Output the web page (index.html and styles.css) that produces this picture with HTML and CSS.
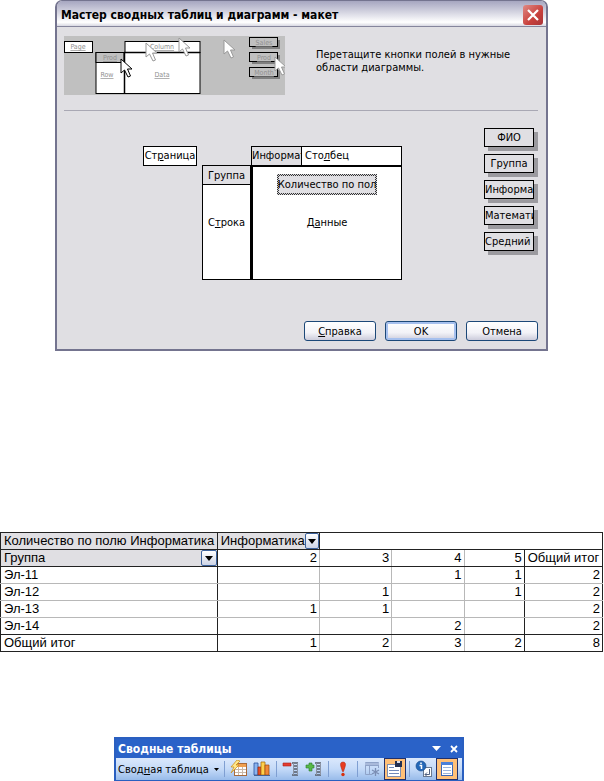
FILE: index.html
```html
<!DOCTYPE html>
<html lang="ru">
<head>
    <meta charset="UTF-8">
    <meta name="viewport" content="width=device-width, initial-scale=1.0">
    <title>Сводные таблицы</title>
    <link rel="stylesheet" href="styles.css">
</head>
<body>
    <section class="dialog">
        <header class="dialog-title">
            <h1>Мастер сводных таблиц и диаграмм - макет</h1>
            <button type="button" class="close" aria-label="Закрыть">
                <svg width="20" height="20" viewBox="0 0 20 20"><path d="M5 5L15 15M15 5L5 15" stroke="#fff" stroke-width="2.2"/></svg>
            </button>
        </header>
        <div class="dialog-body">
            <div class="intro">
                <svg class="preview" width="221" height="59" viewBox="0 0 221 59">
                    <defs>
                        <path id="cursor" d="M0 0V14L3.5 11L7 18L9.5 17L6.500 10H11Z"/>
                    </defs>
                    <rect width="221" height="59" fill="#c0c0c0"/>
                    <g fill="#fff" stroke="#000">
                        <rect x="0.500" y="5.500" width="28" height="11"/>
                        <rect x="61" y="5.500" width="75" height="11"/>
                        <rect x="32" y="16.500" width="104" height="41"/>
                        <rect x="32" y="16.500" width="28" height="10" fill="#c0c0c0"/>
                        <path d="M60.500 16V58M60 16.500H136" stroke-width="1.500"/>
                    </g>
                    <g fill="#808080">
                        <rect x="188" y="4" width="28" height="9"/>
                        <rect x="188" y="19" width="28" height="9"/>
                        <rect x="188" y="34" width="28" height="9"/>
                    </g>
                    <g fill="#c0c0c0" stroke="#000">
                        <rect x="185.500" y="1.500" width="28" height="9"/>
                        <rect x="185.500" y="16.500" width="28" height="9"/>
                        <rect x="185.500" y="31.500" width="28" height="9"/>
                    </g>
                    <g class="preview-text">
                        <text x="14" y="13">Page</text>
                        <text x="98" y="13">Column</text>
                        <text x="46" y="24">Prod</text>
                        <text x="43" y="41">Row</text>
                        <text x="98" y="41">Data</text>
                        <text x="200" y="9">Sales</text>
                        <text x="200" y="24">Prod</text>
                        <text x="200" y="39">Month</text>
                    </g>
                    <g fill="#fff" stroke="#999">
                        <use href="#cursor" x="82" y="7"/>
                        <use href="#cursor" x="115" y="2"/>
                        <use href="#cursor" x="160" y="4"/>
                        <use href="#cursor" x="211" y="21"/>
                        <use href="#cursor" x="57" y="23" stroke="#000"/>
                    </g>
                </svg>
                <p>Перетащите кнопки полей в нужные области диаграммы.</p>
            </div>
            <div class="layout">
                <div class="page-area">Ст<u>р</u>аница</div>
                <div class="pivot">
                    <div class="column-area">
                        <button type="button" class="field">Информат</button>
                        <span>Сто<u>л</u>бец</span>
                    </div>
                    <div class="row-area">
                        <button type="button" class="field">Группа</button>
                        <span>С<u>т</u>рока</span>
                    </div>
                    <div class="data-area">
                        <button type="button" class="data-field"><span>Количество по пол</span></button>
                        <span>Д<u>а</u>нные</span>
                    </div>
                </div>
                <div class="field-list">
                    <button type="button" class="field">ФИО</button>
                    <button type="button" class="field">Группа</button>
                    <button type="button" class="field long">Информат</button>
                    <button type="button" class="field long">Математи</button>
                    <button type="button" class="field long">Средний</button>
                </div>
            </div>
            <div class="actions">
                <button type="button"><u>С</u>правка</button>
                <button type="button" class="default">OK</button>
                <button type="button">Отмена</button>
            </div>
        </div>
    </section>

    <table class="report">
        <colgroup>
            <col class="col-group"><col class="col-2"><col class="col-3"><col class="col-4"><col class="col-5"><col class="col-total">
        </colgroup>
        <thead>
            <tr>
                <th class="shade">Количество по полю Информатика</th>
                <th class="shade">
                    <div class="filter">Информатика
                        <button type="button" class="arrow" aria-label="Фильтр: Информатика"><svg width="8" height="5" viewBox="0 0 8 5"><path d="M0 0H8L4 5Z"/></svg></button>
                    </div>
                </th>
                <th colspan="4"></th>
            </tr>
            <tr>
                <th class="shade">
                    <div class="filter">Группа
                        <button type="button" class="arrow" aria-label="Фильтр: Группа"><svg width="8" height="5" viewBox="0 0 8 5"><path d="M0 0H8L4 5Z"/></svg></button>
                    </div>
                </th>
                <td>2</td><td>3</td><td>4</td><td>5</td><th>Общий итог</th>
            </tr>
        </thead>
        <tbody>
            <tr><th>Эл-11</th><td></td><td></td><td>1</td><td>1</td><td>2</td></tr>
            <tr><th>Эл-12</th><td></td><td>1</td><td></td><td>1</td><td>2</td></tr>
            <tr><th>Эл-13</th><td>1</td><td>1</td><td></td><td></td><td>2</td></tr>
            <tr><th>Эл-14</th><td></td><td></td><td>2</td><td></td><td>2</td></tr>
        </tbody>
        <tfoot>
            <tr><th>Общий итог</th><td>1</td><td>2</td><td>3</td><td>2</td><td>8</td></tr>
        </tfoot>
    </table>

    <section class="toolbar">
        <header class="toolbar-title">
            <h2>Сводные таблицы</h2>
            <button type="button" aria-label="Параметры панели"><svg width="9" height="5" viewBox="0 0 9 5"><path d="M0 0H9L4.500 5Z" fill="#fff"/></svg></button>
            <button type="button" aria-label="Закрыть панель"><svg width="8" height="8" viewBox="0 0 8 8"><path d="M1 1L7 7M7 1L1 7" stroke="#fff" stroke-width="1.800"/></svg></button>
        </header>
        <div class="tools">
            <button type="button" class="menu"><span>Свод<u>н</u>ая таблица</span><svg width="5" height="3" viewBox="0 0 5 3"><path d="M0 0H5L2.500 3Z"/></svg></button>
            <i class="sep"></i>
            <button type="button" aria-label="Формат отчета">
                <svg width="18" height="18" viewBox="0 0 18 18">
                    <rect x="4.500" y="3.500" width="12" height="12" fill="#fff" stroke="#a86a3c"/>
                    <path d="M5 4H16V7H5Z" fill="#f0a050"/>
                    <path d="M5 9.500H16M5 12.500H16M8.500 7V15M12.500 7V15" stroke="#c9b8a8"/>
                    <path d="M7 0L1 7H4L1 13L9 5H6L10 1Z" fill="#ffe88c" stroke="#c98a10" stroke-width=".7"/>
                </svg>
            </button>
            <button type="button" aria-label="Мастер диаграмм">
                <svg width="18" height="18" viewBox="0 0 18 18">
                    <path d="M1 3H5V15H1Z" fill="#8ab4f0" stroke="#2850a0" stroke-width=".8"/>
                    <path d="M5 7H8V15H5Z" fill="#e85028" stroke="#98280c" stroke-width=".7"/>
                    <path d="M8 2H12V15H8Z" fill="#ffd04c" stroke="#a87010" stroke-width=".8"/>
                    <path d="M12 5H16V15H12Z" fill="#f08838" stroke="#98480c" stroke-width=".7"/>
                    <path d="M1 15.500H17" stroke="#486090"/>
                </svg>
            </button>
            <i class="sep"></i>
            <button type="button" aria-label="Скрыть детали">
                <svg width="18" height="18" viewBox="0 0 18 18">
                    <path d="M1 3H9V6H1Z" fill="#e43c30" stroke="#a82018" stroke-width=".6"/>
                    <path d="M10 3H16M11 6H16M11 9H16M11 12H16M10 15H16" stroke="#555c68" stroke-width="1.500"/>
                    <path d="M11.500 3V15M15.500 3V15" stroke="#8c94a4"/>
                </svg>
            </button>
            <button type="button" aria-label="Отобразить детали">
                <svg width="18" height="18" viewBox="0 0 18 18">
                    <path d="M4 3H7V5H9V8H7V11H4V8H1V5H4Z" fill="#58b848" stroke="#28782c" stroke-width=".6"/>
                    <path d="M10 3H16M11 6H16M11 9H16M11 12H16M10 15H16" stroke="#555c68" stroke-width="1.500"/>
                    <path d="M11.500 3V15M15.500 3V15" stroke="#8c94a4"/>
                </svg>
            </button>
            <i class="sep"></i>
            <button type="button" aria-label="Обновить данные">
                <svg width="18" height="18" viewBox="0 0 18 18">
                    <path d="M9 2C11.500 2 12 4 11 7L9.500 11.500H8.500L7 7C6 4 6.500 2 9 2Z" fill="#e83c20" stroke="#a8200c" stroke-width=".5"/>
                    <circle cx="9" cy="14.500" r="1.700" fill="#d8300c"/>
                </svg>
            </button>
            <i class="sep"></i>
            <button type="button" aria-label="Включать скрытые элементы" disabled>
                <svg width="18" height="18" viewBox="0 0 18 18">
                    <path d="M9 14.500H2.500V2.500H15.500V8M2 5.500H16M6.500 5V14" fill="none" stroke="#8fa3c8"/>
                    <path d="M2 3H16V5H2Z" fill="#a9badb"/>
                    <path d="M12.500 8V16M9 10L16 14M16 10L9 14" stroke="#7b8eb4" stroke-width="1.300"/>
                </svg>
            </button>
            <button type="button" class="pressed" aria-label="Всегда отображать элементы">
                <svg width="18" height="18" viewBox="0 0 18 18">
                    <rect x="1.500" y="4.500" width="13" height="12" fill="#fff" stroke="#8090b0"/>
                    <path d="M3 7.500H8M3 10.500H13M3 13.500H13" stroke="#7088b8"/>
                    <rect x="9" y="1" width="7" height="6" fill="#243050"/><path d="M11 1H14V3H11Z" fill="#d8e0f0"/>
                </svg>
            </button>
            <i class="sep"></i>
            <button type="button" aria-label="Параметры поля">
                <svg width="18" height="18" viewBox="0 0 18 18">
                    <rect x="8.500" y="7.500" width="8" height="9" fill="#fff" stroke="#687890"/>
                    <path d="M14.500 9V14.500H10M10 14.500L12 12.500M10 14.500L12 16.500" fill="none" stroke="#506080"/>
                    <circle cx="6" cy="6" r="5" fill="#2468b8" stroke="#184888" stroke-width=".6"/>
                    <path d="M6 2.500V4M4.500 5.500H6.500V9" fill="none" stroke="#fff" stroke-width="1.500"/>
                </svg>
            </button>
            <button type="button" class="pressed" aria-label="Показать список полей">
                <svg width="18" height="18" viewBox="0 0 18 18">
                    <rect x="3.500" y="2.500" width="11" height="13" fill="#fff" stroke="#3c68b8"/>
                    <path d="M3 2H15V5H3Z" fill="#4c80d8"/>
                    <path d="M5 7.500H13M5 10.500H13M5 13.500H13" stroke="#9cb4dc"/>
                </svg>
            </button>
        </div>
    </section>
</body>
</html>
```

FILE: styles.css
```css
* {
    margin: 0;
    padding: 0;
    box-sizing: border-box;
}

body {
    background-color: #fff;
    color: #000;
    font-family: "DejaVu Sans Condensed", "DejaVu Sans", sans-serif;
    font-size: 11px;
    line-height: 13px;
}

button {
    border: none;
    background: none;
    color: inherit;
    font: inherit;
}

svg {
    display: block;
}

/* wizard dialog */
.dialog {
    margin: 0 56px 0 55px;
    border: 2px solid #74748f;
    border-top-width: 1px;
    border-radius: 7px 7px 0 0;
    background-color: #e0dfe3;
    overflow: hidden;
}

.dialog-title {
    display: flex;
    align-items: center;
    justify-content: space-between;
    height: 26px;
    padding: 2px 3px 0 4px;
    border-bottom: 1px solid #85859c;
    background: linear-gradient(#a6a6c0, #c5c5d6 30%, #fff 85%, #d8d8e2);
}

.dialog-title h1 {
    font-size: 12px;
    line-height: 16px;
}

.close {
    width: 20px;
    height: 20px;
    border-radius: 3px;
    background: linear-gradient(135deg, #e08a84, #c8403c 60%, #a83438);
}

.dialog-body {
    padding: 9px 8px 8px 7px;
}

.intro {
    display: flex;
    gap: 31px;
    height: 75px;
    border-bottom: 1px solid #a9a8b4;
}

.intro p {
    width: 200px;
    padding-top: 12px;
}

.preview-text {
    fill: #909090;
    font-size: 7px;
    text-anchor: middle;
    text-decoration: underline;
}

.preview {
    flex: none;
}

.layout {
    display: flex;
    align-items: flex-start;
    padding: 17px 4px 0 79px;
}

.page-area {
    width: 54px;
    height: 20px;
    margin: 18px 5px 0 0;
    border: 1px solid #000;
    background-color: #fff;
    line-height: 18px;
    text-align: center;
    white-space: nowrap;
}

.pivot {
    display: grid;
    grid-template-columns: 49px 151px;
    grid-template-rows: 19px 115px;
    margin-top: 18px;
}

.column-area,
.row-area,
.data-area {
    display: flex;
    border: 1px solid #000;
    background-color: #fff;
}

.column-area {
    grid-column: 2;
    gap: 3px;
    border-bottom: none;
    line-height: 18px;
}

.row-area {
    flex-direction: column;
    align-items: center;
    gap: 31px;
}

.data-area {
    flex-direction: column;
    align-items: center;
    gap: 21px;
    padding-top: 7px;
    border-width: 2px 1px 1px 2px;
}

.field {
    width: 50px;
    height: 19px;
    border: 1px solid #000;
    background-color: #e0dfe3;
    white-space: nowrap;
    overflow: hidden;
}

.pivot .field {
    flex: none;
    border-width: 0 1px 1px 0;
    text-align: left;
}

.pivot .row-area .field {
    width: 100%;
    border-right: none;
    text-align: center;
}

.data-field {
    width: 100px;
    height: 21px;
    padding: 2px;
    background: repeating-conic-gradient(#333 0 25%, #d8d8dc 0 50%) 0 0 / 2px 2px;
}

.data-field span {
    display: flex;
    justify-content: center;
    height: 17px;
    background-color: #e0dfe3;
    line-height: 17px;
    white-space: nowrap;
}

.field-list {
    display: grid;
    gap: 7px;
    margin-left: auto;
}

.field-list .field {
    box-shadow: 4px 4px 0 #9b9a9f;
}

.field-list .long {
    text-align: left;
}

.actions {
    display: flex;
    justify-content: flex-end;
    gap: 9px;
    padding-top: 41px;
}

.actions button {
    width: 72px;
    height: 20px;
    border: 1px solid #1c4878;
    border-radius: 3px;
    background: linear-gradient(#fff, #f2f2f7 60%, #ccccdb);
}

.actions .default {
    box-shadow: inset 0 0 0 2px #a6c0ee;
}

/* pivot report */
.report {
    width: calc(100% - 1px);
    margin-top: 181px;
    border-collapse: collapse;
    border: 1px solid #222;
    table-layout: fixed;
    font-family: "Liberation Sans", Arial, sans-serif;
    font-size: 13px;
    line-height: 16px;
}

.col-group { width: 36%; }
.col-2 { width: 17%; }
.col-3 { width: 12%; }
.col-4 { width: 12%; }
.col-5 { width: 10%; }
.col-total { width: 13%; }

.report th,
.report td {
    height: 17px;
    padding: 0 2px 0 3px;
    border: 1px solid #b8b8b8;
    font-weight: normal;
    text-align: right;
    white-space: nowrap;
}

.report th {
    border-color: #222;
    text-align: left;
}

.report tbody th {
    border-top-color: #b8b8b8;
    border-bottom-color: #b8b8b8;
}

.report thead td,
.report tfoot td,
.report tbody tr:last-child > * {
    border-bottom-color: #222;
}

.report td:nth-child(5),
.report td:last-child {
    border-right-color: #222;
}

.report .shade {
    background-color: #e0dfe3;
}

.filter {
    display: flex;
    justify-content: space-between;
    height: 16px;
    margin-right: -2px;
}

.arrow {
    display: flex;
    align-items: center;
    justify-content: center;
    width: 16px;
    height: 16px;
    border: 1px solid #3c629c;
    border-radius: 2px;
    background: linear-gradient(#fff, #cdd4e6);
}

/* floating toolbar */
.toolbar {
    width: 58%;
    margin: 85px auto 0 114px;
    border: 2px solid #2a5fc0;
    background-color: #2a62c8;
}

.toolbar-title {
    display: flex;
    align-items: center;
    gap: 9px;
    height: 19px;
    padding: 0 4px 0 2px;
    color: #fff;
}

.toolbar-title h2 {
    flex: 1;
    font-size: 12px;
    line-height: 16px;
}

.tools {
    display: flex;
    align-items: center;
    gap: 1px;
    height: 22px;
    padding-left: 2px;
    background: linear-gradient(#dbe8fc, #c4daf8 50%, #98bbea);
}

.tools button {
    flex: none;
    padding: 2px;
}

.tools .menu {
    display: flex;
    align-items: center;
    gap: 5px;
    padding: 0 2px 0 0;
    white-space: nowrap;
}

.tools .pressed {
    padding: 1px;
    border: 1px solid #20306c;
    background-color: #ffc078;
}

.sep {
    width: 1px;
    height: 16px;
    margin: 0 2px;
    background-color: #7f9fd2;
}
```
